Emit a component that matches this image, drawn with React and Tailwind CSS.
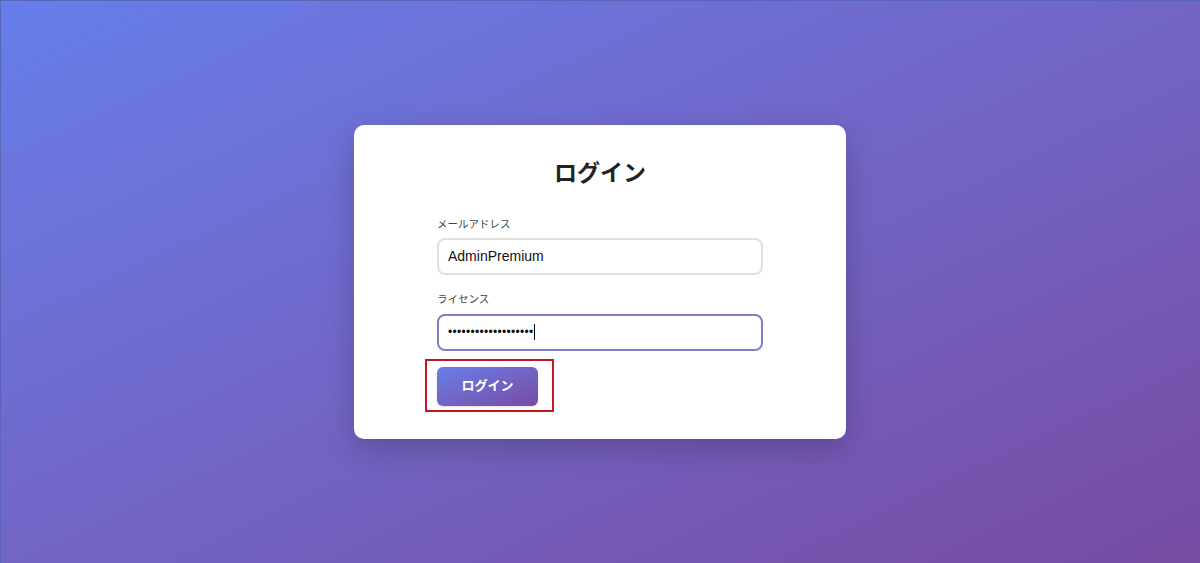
import React from 'react';

const font = { fontFamily: '"Liberation Sans", "Noto Sans CJK JP", sans-serif' };

export default function App() {
  return (
    <div
      className="min-h-screen w-full flex items-center justify-center bg-gradient-to-br from-[#667eea] to-[#764ba2] shadow-[inset_1px_1px_0_#5a64b8]"
      style={font}
    >
      {/* Card */}
      <div className="w-[492px] bg-white rounded-[10px] shadow-[0_10px_30px_rgba(0,0,0,0.2)] pt-[32px] pb-[33px] px-[83px]">
        <h1 className="text-center text-[23px] leading-8 font-bold text-[#222] mb-[27px]">ログイン</h1>

        <label className="block text-[10.5px] leading-4 text-[#444] mb-[6px]">メールアドレス</label>
        <div className="h-[37px] border-2 border-[#e0e0e0] rounded-[8px] flex items-center px-[9px] text-[14px] text-[#111]">
          AdminPremium
        </div>

        <label className="block text-[10.5px] leading-4 text-[#444] mt-[16px] mb-[7px]">ライセンス</label>
        <div className="h-[37px] border-2 border-[#7c83c4] rounded-[8px] flex items-center px-[9px] text-[12px] text-[#111]">
          <span className="tracking-[0.3px]">•••••••••••••••••••</span>
          <span className="w-px h-[16px] bg-black"></span>
        </div>

        {/* Button with annotation */}
        <div className="relative mt-[16px] w-fit">
          <div className="absolute -left-[12px] -top-[8px] -right-[16px] -bottom-[6px] border-2 border-[#c4161c] pointer-events-none"></div>
          <button className="h-[39px] w-[101px] rounded-[6px] bg-gradient-to-br from-[#667eea] to-[#764ba2] text-white text-[13px] font-bold shadow-sm">
            ログイン
          </button>
        </div>
      </div>
    </div>
  );
}
